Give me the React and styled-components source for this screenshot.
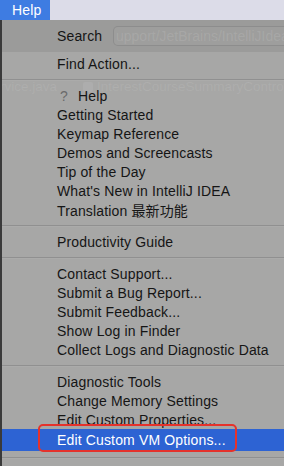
import styled, { createGlobalStyle } from "styled-components";

const GlobalStyle = createGlobalStyle`
  html, body {
    margin: 0;
    padding: 0;
    background: #a6a6a5;
    font-family: "Liberation Sans", Arial, "Noto Sans CJK SC", sans-serif;
    overflow: hidden;
  }
`;

const Screen = styled.div`
  width: 284px;
  height: 466px;
  overflow: hidden;
  display: flex;
  flex-direction: column;
`;

const MenuBar = styled.div`
  height: 20px;
  flex: none;
  display: flex;
  background: #dcdce8;
`;

const MenuTitle = styled.div`
  width: 50px;
  box-sizing: border-box;
  padding-left: 12px;
  background: #3e7ce2;
  color: #fff;
  font-size: 14px;
  letter-spacing: 0.2px;
  line-height: 20px;
`;

const Body = styled.div`
  flex: 1;
  display: flex;
  min-height: 0;
`;

const LeftEdge = styled.div`
  width: 2px;
  background: #3a3a3a;
`;

const Menu = styled.div`
  flex: 1;
  position: relative;
  display: flex;
  flex-direction: column;
  background: #a7a7a6;
  overflow: hidden;
`;

const Ghost = styled.span`
  position: absolute;
  white-space: nowrap;
  font-size: 13.5px;
  color: rgba(255, 255, 255, 0.09);
  top: ${(p) => p.$top}px;
  left: ${(p) => p.$left}px;
  pointer-events: none;
`;

const GhostIcon = styled.span`
  position: absolute;
  top: 62px;
  left: 81px;
  width: 10px;
  height: 10px;
  border-radius: 2px;
  background: rgba(255, 255, 255, 0.08);
`;

const SearchRow = styled.div`
  height: 32px;
  flex: none;
  display: flex;
  align-items: center;
  padding-left: 55px;
  background: #9b9b9a;
  position: relative;
  margin-bottom: 2px;
`;

const SearchLabel = styled.span`
  font-size: 14px;
  letter-spacing: 0.15px;
  color: #151515;
  width: 56px;
  position: relative;
`;

const SearchField = styled.div`
  flex: 1;
  height: 20px;
  margin-right: -12px;
  box-sizing: border-box;
  border: 1px solid rgba(0, 0, 0, 0.1);
  border-radius: 5px;
  background: #9e9e9d;
  overflow: hidden;
  white-space: nowrap;
  font-size: 14px;
  line-height: 18px;
  padding-left: 2px;
  color: rgba(255, 255, 255, 0.1);
`;

const Item = styled.div`
  height: ${(p) => (p.$selected ? 22 : 19)}px;
  flex: none;
  display: flex;
  align-items: center;
  gap: 8px;
  padding-left: 55px;
  font-size: 14px;
  letter-spacing: 0.15px;
  white-space: nowrap;
  color: ${(p) => (p.$selected ? "#ffffff" : "#151515")};
  background: ${(p) => (p.$selected ? "#2d63d3" : "transparent")};
  position: relative;
`;

const HelpMark = styled.span`
  color: #6b6b6b;
  width: 10px;
  padding-left: 3px;
  font-size: 14px;
`;

const Separator = styled.div`
  height: 1px;
  flex: none;
  margin: 6px 0;
  background: #909090;
  box-shadow: 0 1px 0 rgba(255, 255, 255, 0.05);
`;

const Annotation = styled.div`
  position: absolute;
  left: 36px;
  top: -5px;
  width: 199px;
  height: 28px;
  border: 2px solid #e5322b;
  border-radius: 5px;
  box-sizing: border-box;
  pointer-events: none;
`;

const groups = [
  ["Getting Started", "Keymap Reference", "Demos and Screencasts", "Tip of the Day", "What's New in IntelliJ IDEA", "Translation 最新功能"],
  ["Productivity Guide"],
  ["Contact Support...", "Submit a Bug Report...", "Submit Feedback...", "Show Log in Finder", "Collect Logs and Diagnostic Data"],
  ["Diagnostic Tools", "Change Memory Settings", "Edit Custom Properties..."],
];

const App = () => {
  return (
    <>
      <GlobalStyle />
      <Screen>
        <MenuBar>
          <MenuTitle>Help</MenuTitle>
        </MenuBar>
        <Body>
          <LeftEdge />
          <Menu>
            <Ghost $top={8} $left={-4}>rary/Applic</Ghost>
            <Ghost $top={59} $left={-2}>rvice.java</Ghost>
            <GhostIcon />
            <Ghost $top={59} $left={95}>InterestCourseSummaryController.java</Ghost>
            <SearchRow>
              <SearchLabel>Search</SearchLabel>
              <SearchField>upport/JetBrains/IntelliJIdea2020.3</SearchField>
            </SearchRow>
            <Item>Find Action...</Item>
            <Separator />
            <Item>
              <HelpMark>?</HelpMark>Help
            </Item>
            {groups.map((g, gi) => (
              <div key={gi}>
                {gi > 0 && <Separator />}
                {g.map((t) => (
                  <Item key={t}>{t}</Item>
                ))}
              </div>
            ))}
            <Item $selected>
              Edit Custom VM Options...
              <Annotation />
            </Item>
            <Separator />
            <Item>Register...</Item>
          </Menu>
        </Body>
      </Screen>
    </>
  );
};

export default App;
